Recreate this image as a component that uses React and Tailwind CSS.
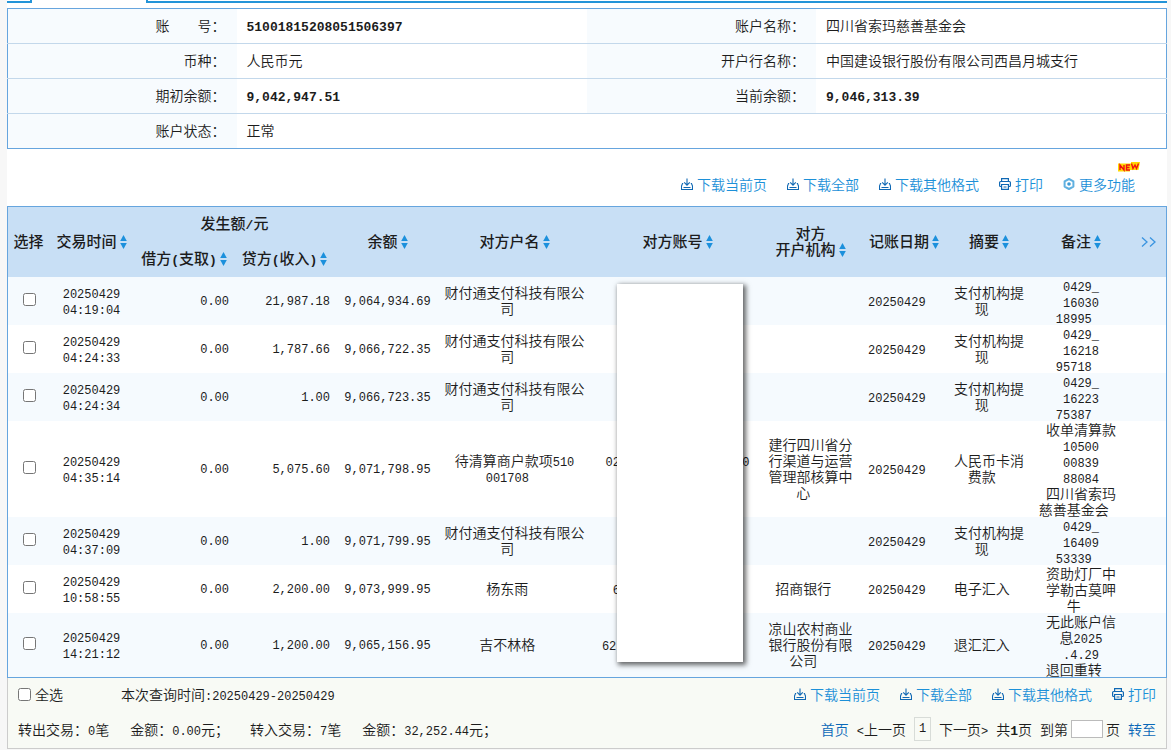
import React from "react";

/* Latin runs are set in a monospaced face, Chinese runs in the body face. */
function Mixed({ children, bold = false }) {
  return String(children)
    .split(/([\x21-\x7e\u00a0]+)/)
    .filter(Boolean)
    .map((part, i) =>
      /^[\x21-\x7e\u00a0]/.test(part) ? (
        <span
          key={i}
          className={
            bold
              ? "font-['Liberation_Mono',monospace] text-[13px] font-bold leading-none"
              : "font-['Liberation_Mono',monospace] text-[12px] leading-none"
          }
        >
          {part}
        </span>
      ) : (
        part
      )
    );
}

function Lines({ lines, tail = true }) {
  return lines.map((line, i) => (
    <span key={i} className="block h-4 whitespace-nowrap">
      <Mixed>{tail && i === lines.length - 1 ? line + "\u00a0\u00a0" : line}</Mixed>
    </span>
  ));
}

function SortIcon() {
  return (
    <svg viewBox="0 0 7 14" className="ml-[3px] inline-block h-[14px] w-[7px] align-[-2px]" fill="#1c90dc" aria-hidden="true">
      <path d="M3.5 0 L6.8 6 H0.2 Z" />
      <path d="M3.5 14 L6.8 8 H0.2 Z" />
    </svg>
  );
}

function DownloadIcon() {
  return (
    <svg viewBox="0 0 12 12" className="h-3 w-3" fill="none" stroke="#0f68b4" strokeWidth="1.1" aria-hidden="true">
      <path d="M6 0.5 V7 M3.2 4.4 L6 7.2 L8.8 4.4 M2.2 5.5 H1.5 L0.5 8 V11.5 H11.5 V8 L10.5 5.5 H9.8 M2.5 9.5 H9.5" />
    </svg>
  );
}

function PrintIcon() {
  return (
    <svg viewBox="0 0 12 12" className="h-3 w-3" fill="none" stroke="#0f68b4" strokeWidth="1.2" aria-hidden="true">
      <path d="M2.6 3.5 V0.6 H9.4 V3.5 M2.6 8.5 H1.5 Q0.6 8.5 0.6 7.6 V4.5 Q0.6 3.5 1.6 3.5 H10.4 Q11.4 3.5 11.4 4.5 V7.6 Q11.4 8.5 10.5 8.5 H9.4 M2.6 6.5 H9.4 V11.4 H2.6 Z M4.5 9 H7.5" />
    </svg>
  );
}

function HexIcon() {
  return (
    <svg viewBox="0 0 12 12" className="h-3 w-3" aria-hidden="true">
      <path d="M6 1 L10.4 3.4 V8.6 L6 11 L1.6 8.6 V3.4 Z" fill="none" stroke="#5fb0e0" strokeWidth="2" strokeLinejoin="round" />
      <circle cx="6" cy="6" r="1.8" fill="#3d9bd6" />
    </svg>
  );
}

function Tool({ icon, children }) {
  return (
    <a href="#" className="flex items-center gap-1 whitespace-nowrap text-[#1c90d8]">
      {icon}
      <span>{children}</span>
    </a>
  );
}

function Downloads() {
  return (
    <>
      <Tool icon={<DownloadIcon />}>下载当前页</Tool>
      <Tool icon={<DownloadIcon />}>下载全部</Tool>
      <Tool icon={<DownloadIcon />}>下载其他格式</Tool>
      <Tool icon={<PrintIcon />}>打印</Tool>
    </>
  );
}

const info = [
  ["账　　号：", "51001815208051506397", "账户名称：", "四川省索玛慈善基金会"],
  ["币种：", "人民币元", "开户行名称：", "中国建设银行股份有限公司西昌月城支行"],
  ["期初余额：", "9,042,947.51", "当前余额：", "9,046,313.39"],
  ["账户状态：", "正常"],
];

const PAY = ["财付通支付科技有限公", "司"];
const WITHDRAW = ["支付机构提", "现"];

const rows = [
  { time: "04:19:04", credit: "21,987.18", balance: "9,064,934.69", name: PAY, digest: WITHDRAW, memo: ["0429_", "16030", "18995"] },
  { time: "04:24:33", credit: "1,787.66", balance: "9,066,722.35", name: PAY, digest: WITHDRAW, memo: ["0429_", "16218", "95718"] },
  { time: "04:24:34", credit: "1.00", balance: "9,066,723.35", name: PAY, digest: WITHDRAW, memo: ["0429_", "16223", "75387"] },
  {
    time: "04:35:14",
    credit: "5,075.60",
    balance: "9,071,798.95",
    name: ["待清算商户款项510", "001708"],
    account: ["02" + "\u00a0".repeat(17) + "0", ""],
    bank: ["建行四川省分", "行渠道与运营", "管理部核算中", "心"],
    digest: ["人民币卡消", "费款"],
    memo: ["收单清算款", "10500", "00839", "88084", "四川省索玛", "慈善基金会"],
  },
  { time: "04:37:09", credit: "1.00", balance: "9,071,799.95", name: PAY, digest: WITHDRAW, memo: ["0429_", "16409", "53339"] },
  {
    time: "10:58:55",
    credit: "2,200.00",
    balance: "9,073,999.95",
    name: ["杨东雨"],
    account: ["6" + "\u00a0".repeat(15)],
    bank: ["招商银行"],
    digest: ["电子汇入"],
    memo: ["资助灯厂中", "学勒古莫呷", "牛"],
  },
  {
    time: "14:21:12",
    credit: "1,200.00",
    balance: "9,065,156.95",
    name: ["吉不林格"],
    account: ["62" + "\u00a0".repeat(17)],
    bank: ["凉山农村商业", "银行股份有限", "公司"],
    digest: ["退汇汇入"],
    memo: ["无此账户信", "息2025", ".4.29", "退回重转"],
  },
];

function InfoTable() {
  return (
    <table className="w-full table-fixed border-collapse border border-[#66a5de]">
      <colgroup>
        <col className="w-[229px]" />
        <col />
        <col className="w-[229px]" />
        <col />
      </colgroup>
      <tbody>
        {info.map((row) => (
          <tr key={row[0]} className="h-[35px] border-b border-[#c3d8eb] last:border-[#66a5de]">
            {row.map((cell, i) =>
              i % 2 === 0 ? (
                <th key={i} scope="row" className="bg-[#f7fbfe] pb-[2px] pr-[11px] text-right font-[350]">
                  {cell}
                </th>
              ) : (
                <td key={i} colSpan={row.length === 2 ? 3 : 1} className="pb-[2px] pl-[10px]">
                  <Mixed bold>{cell}</Mixed>
                </td>
              )
            )}
          </tr>
        ))}
      </tbody>
    </table>
  );
}

function Sortable({ children }) {
  return (
    <>
      <Mixed bold>{children}</Mixed>
      <SortIcon />
    </>
  );
}

function RecordTable() {
  return (
    <div className="border border-[#66a5de]">
      <table className="w-full table-fixed border-collapse text-center leading-4">
        <colgroup>
          <col className="w-[41px]" />
          <col className="w-[85px]" />
          <col className="w-[100px]" />
          <col className="w-[101px]" />
          <col className="w-[105px]" />
          <col className="w-[149px]" />
          <col />
          <col className="w-[89px]" />
          <col className="w-[98px]" />
          <col className="w-[72px]" />
          <col className="w-[112px]" />
          <col className="w-[29px]" />
        </colgroup>
        <thead className="whitespace-nowrap bg-[#c8dff5] text-[15px] [&_th]:pb-[2px] [&_th]:font-medium">
          <tr className="h-[35px]">
            <th rowSpan={2}>选择</th>
            <th rowSpan={2}><Sortable>交易时间</Sortable></th>
            <th colSpan={2}><Mixed bold>发生额/元</Mixed></th>
            <th rowSpan={2}><Sortable>余额</Sortable></th>
            <th rowSpan={2}><Sortable>对方户名</Sortable></th>
            <th rowSpan={2}><Sortable>对方账号</Sortable></th>
            <th rowSpan={2}>
              对方
              <br />
              <Sortable>开户机构</Sortable>
            </th>
            <th rowSpan={2}><Sortable>记账日期</Sortable></th>
            <th rowSpan={2}><Sortable>摘要</Sortable></th>
            <th rowSpan={2}><Sortable>备注</Sortable></th>
            <th rowSpan={2} className="text-left">
              <a href="#" aria-label="更多列" className="ml-1 inline-block">
                <svg viewBox="0 0 16 10" className="h-[10px] w-4" fill="none" stroke="#3a94e0" strokeWidth="1.3">
                  <path d="M1 0.5 L6 5 L1 9.5 M9 0.5 L14 5 L9 9.5" />
                </svg>
              </a>
            </th>
          </tr>
          <tr className="h-[35px]">
            <th><Sortable>借方(支取)</Sortable></th>
            <th><Sortable>贷方(收入)</Sortable></th>
          </tr>
        </thead>
        <tbody>
          {rows.map((r, i) => (
            <tr key={r.time} className="odd:bg-[#f5fafe] even:bg-white">
              <td className="pl-[2px]">
                <input type="checkbox" aria-label={"选择 " + r.time} className="mx-auto mb-[3px] block h-[13px] w-[13px]" />
              </td>
              <td className="pb-[3px]"><Lines lines={["20250429", r.time]} tail={false} /></td>
              <td className="pb-[3px] pr-[5px] text-right"><Mixed>0.00</Mixed></td>
              <td className="pb-[3px] pr-[5px] text-right"><Mixed>{r.credit}</Mixed></td>
              <td className="pb-[3px]"><Mixed>{r.balance}</Mixed></td>
              <td className="pb-[3px]"><Lines lines={r.name} /></td>
              <td className="relative pb-[3px]">
                {r.account && <Lines lines={r.account} />}
                {i === 0 && (
                  <div className="absolute left-[28px] top-[7px] z-10 h-[378px] w-[126px] bg-white shadow-[2px_2px_5px_1px_rgba(0,0,0,0.6)]" />
                )}
              </td>
              <td className="pb-[3px]">{r.bank && <Lines lines={r.bank} />}</td>
              <td className="pb-[3px]"><Lines lines={["20250429"]} /></td>
              <td className="pb-[3px]"><Lines lines={r.digest} /></td>
              <td><Lines lines={r.memo} /></td>
              <td />
            </tr>
          ))}
        </tbody>
      </table>
    </div>
  );
}

function Footer() {
  return (
    <footer className="border border-t-0 border-[#ccc] bg-[#f8faf5] px-[10px]">
      <div className="flex h-[35px] items-center justify-between pb-[3px]">
        <div className="flex items-center gap-[58px]">
          <label className="flex items-center gap-1">
            <input type="checkbox" className="h-[13px] w-[13px]" />
            全选
          </label>
          <span><Mixed>本次查询时间:20250429-20250429</Mixed></span>
        </div>
        <div className="flex gap-5"><Downloads /></div>
      </div>
      <div className="flex h-[35px] items-center justify-between whitespace-nowrap pb-[3px]">
        <div className="flex gap-[21px]">
          <span><Mixed>转出交易：0笔</Mixed></span>
          <span><Mixed>金额：0.00元；</Mixed></span>
          <span><Mixed>转入交易：7笔</Mixed></span>
          <span><Mixed>金额：32,252.44元；</Mixed></span>
        </div>
        <nav className="flex items-center gap-2">
          <a href="#" className="text-[#0a68b8]">首页</a>
          <span><Mixed>{"<上一页"}</Mixed></span>
          <span className="flex h-6 w-[17px] items-center justify-center border border-[#d8dcd8]"><Mixed>1</Mixed></span>
          <span><Mixed>{"下一页>"}</Mixed></span>
          <span><Mixed bold>共1页</Mixed></span>
          <label className="flex items-center gap-[3px]">
            到第
            <input type="text" className="h-[18px] w-8 border border-[#bbb] bg-white px-1 text-[12px]" />
            页
          </label>
          <a href="#" className="text-[#0a68b8]">转至</a>
        </nav>
      </div>
    </footer>
  );
}

export default function App() {
  return (
    <div className="min-h-screen bg-[#f7f7f7] pl-[7px] pr-1 font-['Noto_Sans_CJK_SC',sans-serif] text-[14px] font-[350] leading-5 text-[#1c1c1c]">
      <main className="bg-white">
        <div className="flex h-[3px] justify-between gap-[114px]">
          <div className="w-[25px] border-b-2 border-r-2 border-[#2394d8]" />
          <div className="flex-1 border-b-2 border-l-2 border-[#2394d8]" />
        </div>
        <div className="pt-[5px]">
          <InfoTable />
        </div>
        <div className="flex h-[57px] items-end justify-end gap-5 pb-3 pr-8">
          <Downloads />
          <div className="relative">
            <Tool icon={<HexIcon />}>更多功能</Tool>
            <svg viewBox="0 0 22 10" className="absolute -right-[5px] -top-[12px] h-[10px] w-[22px]" aria-hidden="true">
              <path d="M0 1.5 H13 V0 H22 L20.5 8 H12 V9.5 H0 Z" fill="#ffd800" />
              <path d="M2 8 V3 L6 8 V3 M12 3 H8.5 V8 H12 M8.5 5.5 H11.5 M13.5 1.5 L15 6.5 L17 3 L18.5 6.5 L20.5 1.5" fill="none" stroke="#f01010" strokeWidth="1.4" />
            </svg>
          </div>
        </div>
        <RecordTable />
        <Footer />
      </main>
    </div>
  );
}
